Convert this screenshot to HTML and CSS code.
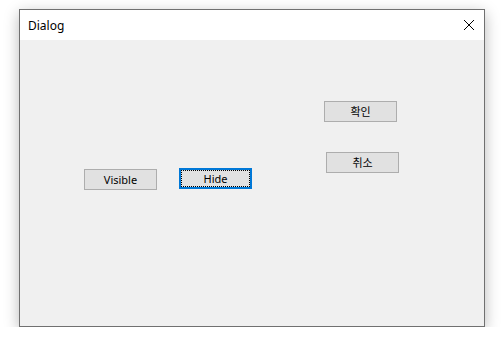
FILE: index.html
```html
<!DOCTYPE html>
<html lang="ko">
<head>
  <meta charset="UTF-8">
  <meta name="viewport" content="width=device-width, initial-scale=1.0">
  <title>Dialog</title>
  <link rel="stylesheet" href="styles.css">
</head>
<body>

  <div class="window">
    <div class="titlebar">
      <span class="title">Dialog</span>
      <svg class="close" width="12" height="12" viewBox="0 0 12 12">
        <path d="M1 1 L11 11 M11 1 L1 11" stroke="#000" stroke-width="1" fill="none"/>
      </svg>
    </div>
    <div class="client">
      <button class="btn btn-ok">확인</button>
      <button class="btn btn-cancel">취소</button>
      <button class="btn btn-visible">Visible</button>
      <button class="btn btn-hide focused"><span>Hide</span></button>
    </div>
  </div>

</body>
</html>
```

FILE: styles.css
```css
body {
  margin: 0;
  padding: 9px 0 0 19px;
  background-color: #fff;
  font-family: "Noto Sans", "Noto Sans CJK KR", sans-serif;
}
.window {
  width: 464px;
  height: 316px;
  border: 1px solid #707070;
  background-color: #f0f0f0;
  box-shadow: 0 4px 14px rgba(0, 0, 0, 0.28);
  display: flex;
  flex-direction: column;
}
.titlebar {
  height: 30px;
  background-color: #fff;
  display: flex;
  align-items: center;
  justify-content: space-between;
  padding: 0 9px 0 8px;
}
.title {
  font-size: 12px;
  color: #000;
}
.close {
  display: block;
}
.client {
  flex: 1;
  position: relative;
}
.btn {
  position: absolute;
  width: 73px;
  height: 21px;
  padding: 0;
  background-color: #e1e1e1;
  border: 1px solid #adadad;
  font-family: "Noto Sans", "Noto Sans CJK KR", sans-serif;
  font-size: 11px;
  color: #000;
  line-height: 17px;
  box-sizing: border-box;
}
.btn-ok {
  left: 304px;
  top: 61px;
}
.btn-cancel {
  left: 306px;
  top: 112px;
}
.btn-visible {
  left: 64px;
  top: 129px;
}
.btn-hide {
  left: 159px;
  top: 128px;
}
.focused {
  border: 2px solid #0078d7;
  padding: 0;
}
.focused span {
  display: block;
  height: 100%;
  border: 1px dotted #000;
  box-sizing: border-box;
  line-height: 15px;
}
```
